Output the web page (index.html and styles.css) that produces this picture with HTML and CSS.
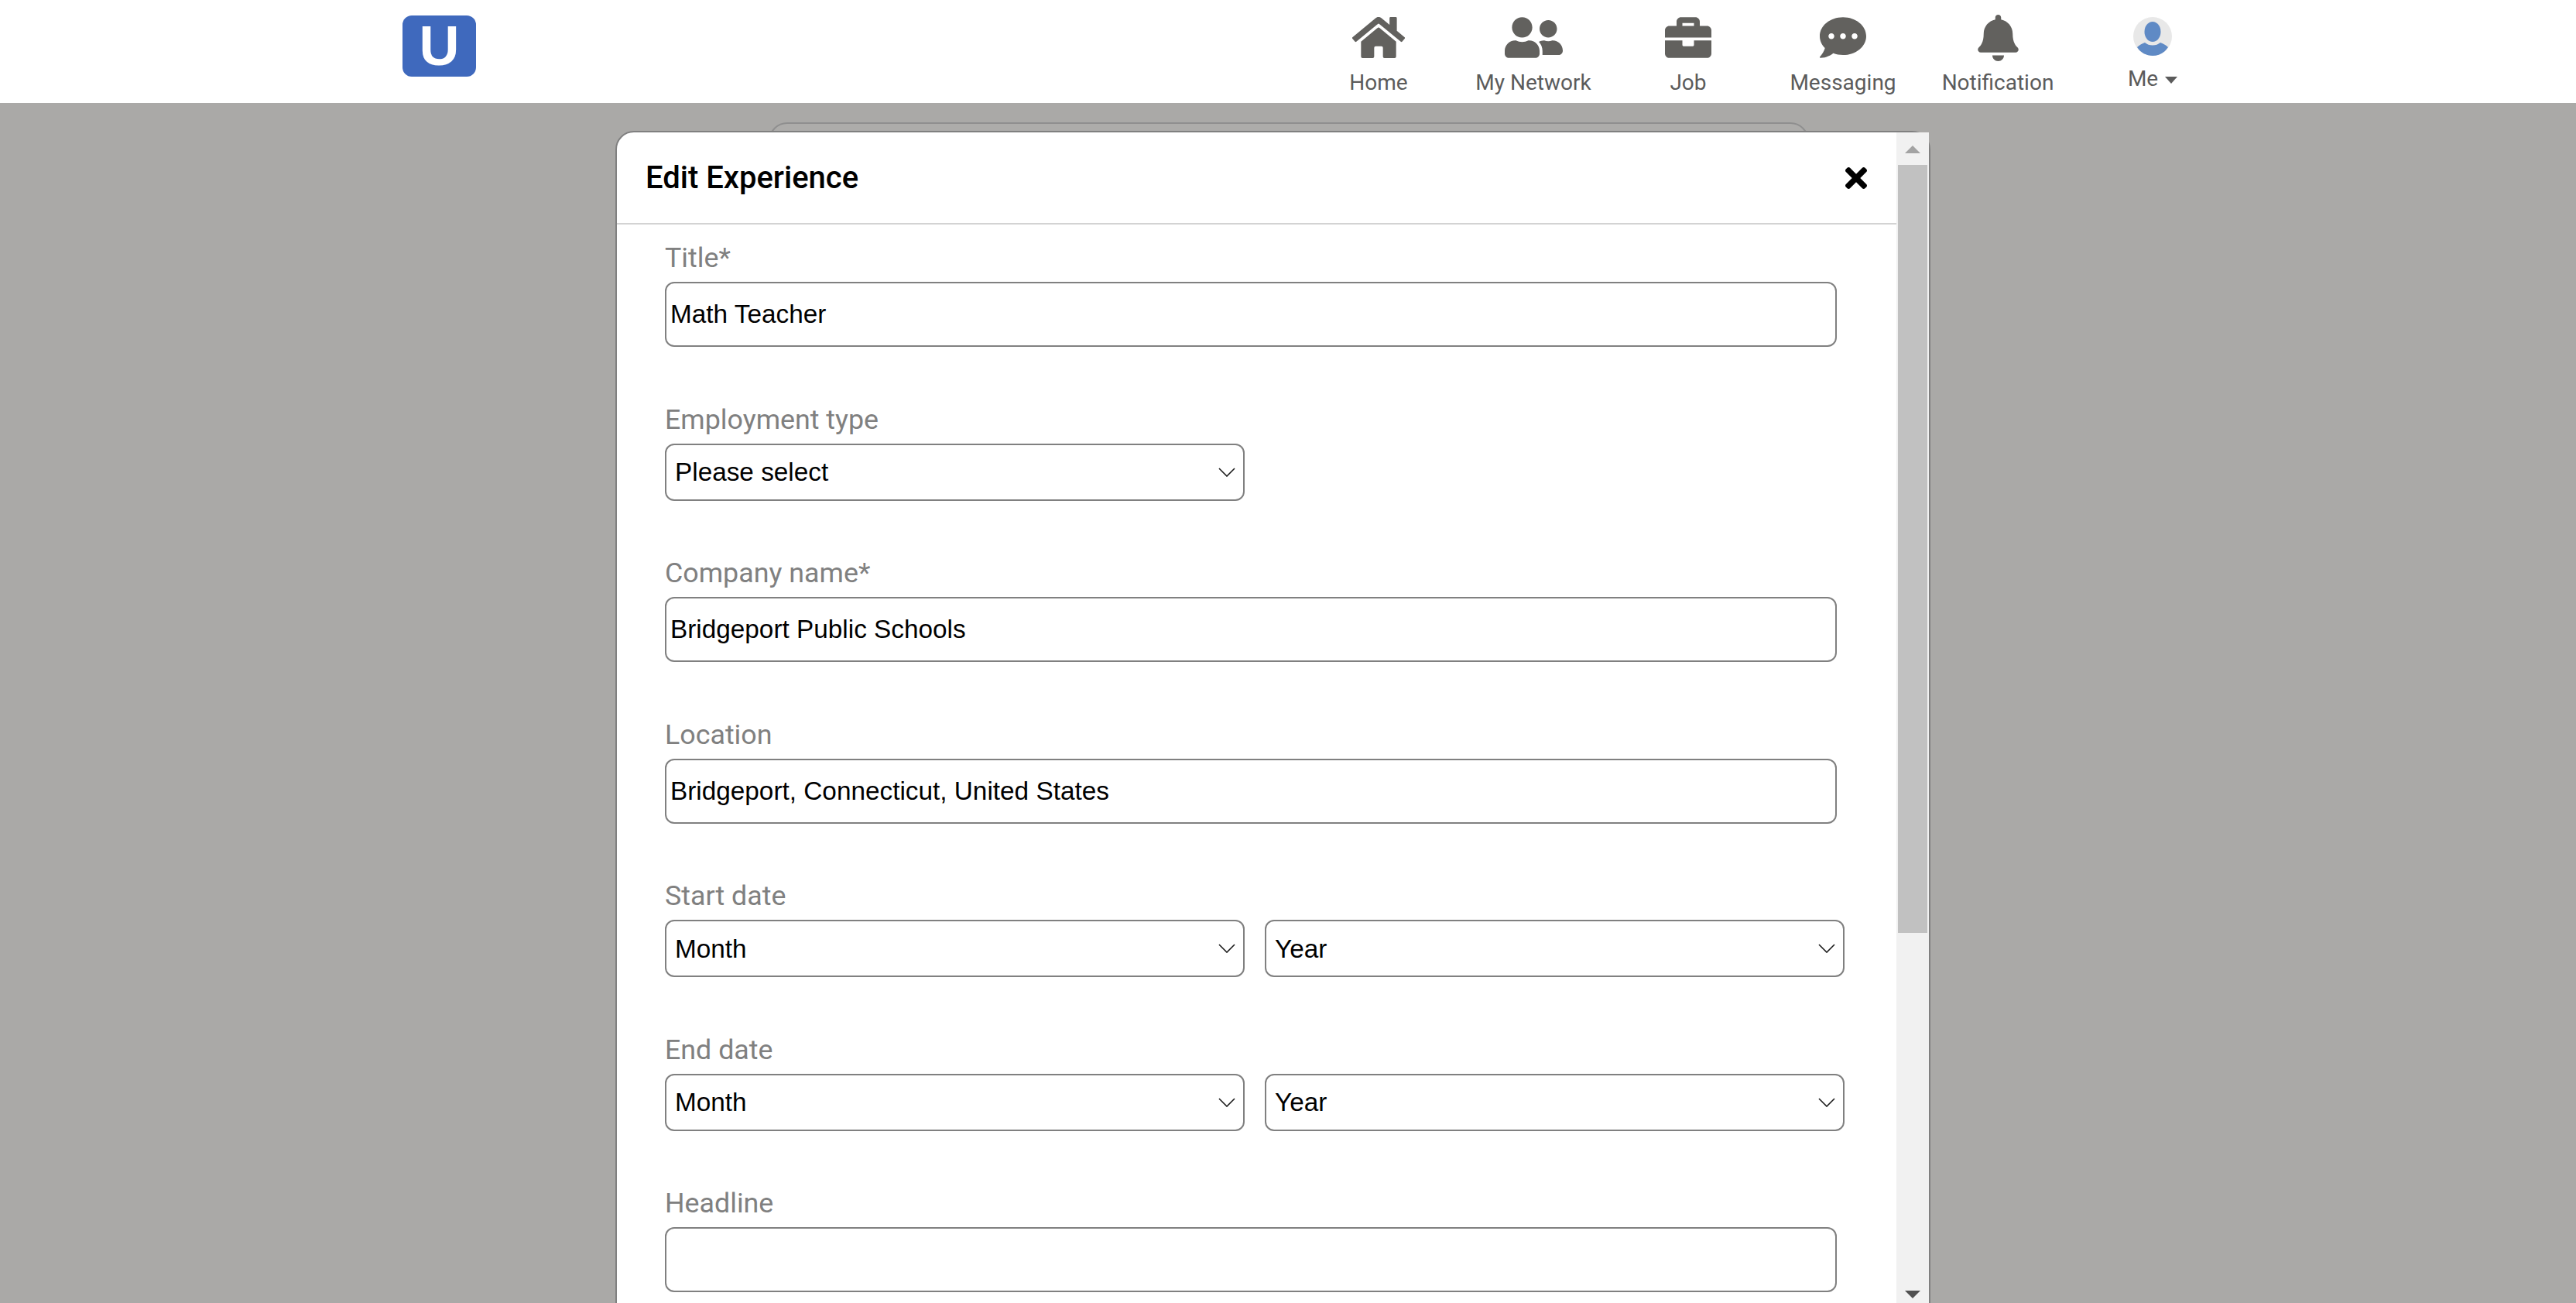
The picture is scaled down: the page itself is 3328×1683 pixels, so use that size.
FILE: index.html
```html
<!DOCTYPE html>
<html>
  <head>
    <title>Edit Experience</title>
    <link rel="stylesheet" href="styles.css">
  </head>
  <body>
    <nav class="navbar">
      <div class="logo">U</div>
      <div class="nav-items">
        <a class="nav-item">
          <svg class="icon icon-home" viewBox="0 32 576 448"><path d="M280.37 148.26L96 300.11V464a16 16 0 0 0 16 16l112.06-.29a16 16 0 0 0 15.92-16V368a16 16 0 0 1 16-16h64a16 16 0 0 1 16 16v95.64a16 16 0 0 0 16 16.05L464 480a16 16 0 0 0 16-16V300L295.67 148.26a12.19 12.19 0 0 0-15.3 0zM571.6 251.47L488 182.56V44.05a12 12 0 0 0-12-12h-56a12 12 0 0 0-12 12v72.61L318.47 43a48 48 0 0 0-61 0L4.34 251.47a12 12 0 0 0-1.6 16.9l25.5 31A12 12 0 0 0 45.15 301l235.22-193.74a12.19 12.19 0 0 1 15.3 0L530.9 301a12 12 0 0 0 16.9-1.6l25.5-31a12 12 0 0 0-1.7-16.93z"/></svg>
          <span>Home</span>
        </a>
        <a class="nav-item">
          <svg class="icon icon-network" viewBox="0 32 640 448"><path d="M192 256c61.9 0 112-50.1 112-112S253.9 32 192 32 80 82.1 80 144s50.1 112 112 112zm76.8 32h-8.3c-20.8 10-43.9 16-68.5 16s-47.6-6-68.5-16h-8.3C51.6 288 0 339.6 0 403.2V432c0 26.5 21.5 48 48 48h288c26.5 0 48-21.5 48-48v-28.8c0-63.6-51.6-115.2-115.2-115.2zM480 256c53 0 96-43 96-96s-43-96-96-96-96 43-96 96 43 96 96 96zm48 32h-3.8c-13.9 4.8-28.6 8-44.2 8s-30.3-3.2-44.2-8H432c-20.4 0-39.2 5.9-55.7 15.4 24.4 26.3 39.7 61.2 39.7 99.8v38.4c0 2.2-.5 4.3-.6 6.4H592c26.5 0 48-21.5 48-48 0-61.9-50.1-112-112-112z"/></svg>
          <span>My Network</span>
        </a>
        <a class="nav-item">
          <svg class="icon icon-job" viewBox="0 32 512 448"><path d="M320 336c0 8.84-7.16 16-16 16h-96c-8.84 0-16-7.16-16-16v-48H0v144c0 25.6 22.4 48 48 48h416c25.6 0 48-22.4 48-48V288H320v48zm144-208h-80V80c0-25.6-22.4-48-48-48H176c-25.6 0-48 22.4-48 48v48H48c-25.6 0-48 22.4-48 48v80h512v-80c0-25.6-22.4-48-48-48zm-144 0H192V96h128v32z"/></svg>
          <span>Job</span>
        </a>
        <a class="nav-item">
          <svg class="icon icon-job" viewBox="0 32 512 448"><path d="M256 32C114.6 32 0 125.1 0 240c0 49.6 21.4 95 57 130.7C44.5 421.1 2.7 466 2.2 466.5c-2.2 2.3-2.8 5.7-1.5 8.7S4.8 480 8 480c66.3 0 116-31.8 140.6-51.4 32.7 12.3 69 19.4 107.4 19.4 141.4 0 256-93.1 256-208S397.4 32 256 32zM128 272c-17.7 0-32-14.3-32-32s14.3-32 32-32 32 14.3 32 32-14.3 32-32 32zm128 0c-17.7 0-32-14.3-32-32s14.3-32 32-32 32 14.3 32 32-14.3 32-32 32zm128 0c-17.7 0-32-14.3-32-32s14.3-32 32-32 32 14.3 32 32-14.3 32-32 32z"/></svg>
          <span>Messaging</span>
        </a>
        <a class="nav-item">
          <svg class="icon icon-bell" viewBox="0 0 448 512"><path d="M224 512c35.32 0 63.97-28.65 63.97-64H160.03c0 35.35 28.65 64 63.97 64zm215.39-149.71c-19.32-20.76-55.47-51.99-55.47-154.29 0-77.7-54.48-139.9-127.94-155.16V32c0-17.67-14.32-32-31.98-32s-31.98 14.33-31.98 32v20.84C118.56 68.1 64.08 130.3 64.08 208c0 102.3-36.15 133.53-55.47 154.29-6 6.45-8.66 14.16-8.61 21.71.11 16.4 12.98 32 32.1 32h383.8c19.12 0 32-15.6 32.1-32 .05-7.55-2.61-15.27-8.61-21.71z"/></svg>
          <span>Notification</span>
        </a>
        <a class="nav-item nav-me">
          <svg class="avatar" viewBox="0 0 50 50">
            <circle cx="25" cy="25" r="25" fill="#e8e8e8"/>
            <ellipse cx="25" cy="19" rx="10.5" ry="13" fill="#5f8ac5"/>
            <path d="M5 39c3-3 7-5 10-6 3 2.500 6 3.500 10 3.500s7-1 10-3.500c3 1 7 3 10 6-4.500 7-12 11-20 11S9.500 46 5 39z" fill="#5f8ac5"/>
          </svg>
          <span class="me-label">Me <i class="caret"></i></span>
        </a>
      </div>
    </nav>

    <main class="page">
      <div class="page-card"></div>

      <div class="modal">
        <div class="modal-main">
          <header class="modal-header">
            <h2>Edit Experience</h2>
            <svg class="close" viewBox="0 80 352 352"><path d="M242.72 256l100.07-100.07c12.28-12.28 12.28-32.19 0-44.48l-22.24-22.24c-12.28-12.28-32.19-12.28-44.48 0L176 189.28 75.93 89.21c-12.28-12.28-32.19-12.28-44.48 0L9.21 111.45c-12.28 12.28-12.28 32.19 0 44.48L109.28 256 9.21 356.07c-12.28 12.28-12.28 32.19 0 44.48l22.24 22.24c12.28 12.28 32.2 12.28 44.48 0L176 322.72l100.07 100.07c12.28 12.28 32.2 12.28 44.48 0l22.24-22.24c12.28-12.28 12.28-32.19 0-44.48L242.72 256z"/></svg>
          </header>

          <form class="modal-body">
            <div class="field">
              <label>Title*</label>
              <input class="text-input" type="text" value="Math Teacher">
            </div>
            <div class="field">
              <label>Employment type</label>
              <div class="select-row">
                <div class="select-box">
                  <select><option>Please select</option></select>
                  <svg class="chevron" viewBox="0 0 22 12"><path d="M1 1l10 10L21 1"/></svg>
                </div>
              </div>
            </div>
            <div class="field">
              <label>Company name*</label>
              <input class="text-input" type="text" value="Bridgeport Public Schools">
            </div>
            <div class="field">
              <label>Location</label>
              <input class="text-input" type="text" value="Bridgeport, Connecticut, United States">
            </div>
            <div class="field">
              <label>Start date</label>
              <div class="select-row">
                <div class="select-box">
                  <select><option>Month</option></select>
                  <svg class="chevron" viewBox="0 0 22 12"><path d="M1 1l10 10L21 1"/></svg>
                </div>
                <div class="select-box">
                  <select><option>Year</option></select>
                  <svg class="chevron" viewBox="0 0 22 12"><path d="M1 1l10 10L21 1"/></svg>
                </div>
              </div>
            </div>
            <div class="field">
              <label>End date</label>
              <div class="select-row">
                <div class="select-box">
                  <select><option>Month</option></select>
                  <svg class="chevron" viewBox="0 0 22 12"><path d="M1 1l10 10L21 1"/></svg>
                </div>
                <div class="select-box">
                  <select><option>Year</option></select>
                  <svg class="chevron" viewBox="0 0 22 12"><path d="M1 1l10 10L21 1"/></svg>
                </div>
              </div>
            </div>
            <div class="field">
              <label>Headline</label>
              <input class="text-input" type="text">
            </div>
          </form>
        </div>

        <div class="scrollbar">
          <div class="scroll-btn"><i class="arrow-up"></i></div>
          <div class="scroll-track"><div class="scroll-thumb"></div></div>
          <div class="scroll-btn scroll-btn-down"><i class="arrow-down"></i></div>
        </div>
      </div>
    </main>
  </body>
</html>
```

FILE: styles.css
```css
html,
body {
  margin: 0;
  height: 100%;
  overflow: hidden;
}
body {
  display: flex;
  flex-direction: column;
  font-family: Roboto, sans-serif;
  background-color: #aaa9a7;
}

/* top bar */
.navbar {
  flex: none;
  height: 133px;
  box-sizing: border-box;
  background-color: #fff;
  padding: 20px 447px 0 520px;
  display: flex;
  justify-content: space-between;
  align-items: flex-start;
}
.logo {
  width: 95px;
  height: 79px;
  border-radius: 12px;
  background-color: #3f69bd;
  color: #fff;
  font-family: "Liberation Sans", sans-serif;
  font-weight: bold;
  font-size: 72px;
  line-height: 79px;
  text-align: center;
}
.nav-items {
  display: flex;
}
.nav-item {
  width: 200px;
  display: flex;
  flex-direction: column;
  align-items: center;
  color: #5b5b5b;
  font-size: 28px;
  line-height: 34px;
  padding-top: 2px;
}
.nav-item span {
  margin-top: 15px;
}
.icon {
  height: 53px;
  fill: #62615e;
  display: block;
}
.icon-home {
  width: 68px;
}
.icon-network {
  width: 75px;
}
.icon-job {
  width: 60px;
}
.icon-bell {
  width: 53px;
  height: 60px;
  margin-top: -3px;
  margin-bottom: -4px;
}
.avatar {
  width: 50px;
  height: 50px;
  display: block;
}
.nav-me .me-label {
  margin-top: 13px;
}
.caret {
  display: inline-block;
  vertical-align: middle;
  margin-left: 2px;
  border-left: 8px solid transparent;
  border-right: 8px solid transparent;
  border-top: 9px solid #5b5b5b;
}

/* page behind the modal */
.page {
  flex: 1;
  position: relative;
  overflow: hidden;
}
.page-card {
  width: 1344px;
  height: 400px;
  box-sizing: border-box;
  margin: 25px 0 0 993px;
  background-color: #adacaa;
  border: 2px solid #8f8f8f;
  border-radius: 24px;
}

/* modal */
.modal {
  position: absolute;
  left: 795px;
  top: 36px;
  width: 1699px;
  height: 1580px;
  box-sizing: border-box;
  display: flex;
  align-items: flex-start;
  background-color: #fff;
  border: 2px solid #808080;
  border-radius: 24px;
}
.modal-main {
  flex: 1;
  min-width: 0;
  height: 100%;
  overflow: hidden;
}
.modal-header {
  height: 119px;
  box-sizing: border-box;
  border-bottom: 2px solid #d3d3d3;
  padding: 0 38px 0 37px;
  display: flex;
  justify-content: space-between;
  align-items: center;
}
.modal-header h2 {
  margin: 0;
  font-size: 40px;
  font-weight: 500;
  color: #000;
}
.close {
  width: 28px;
  height: 28px;
  fill: #000;
}
.modal-body {
  padding: 20px 0 0 62px;
}
.field {
  margin-bottom: 70.5px;
}
.field label {
  display: block;
  color: #808080;
  font-size: 35.8px;
  line-height: 44px;
  padding-top: 1px;
  margin-bottom: 9px;
}
.text-input {
  display: block;
  width: 1514px;
  height: 84px;
  box-sizing: border-box;
  border: 2px solid #808080;
  border-radius: 12px;
  padding: 0 5px;
  outline: none;
  font-family: "Liberation Sans", sans-serif;
  font-size: 33.33px;
  color: #000;
  background-color: #fff;
}
.select-row {
  display: flex;
  gap: 26px;
}
.select-box {
  width: 749px;
  height: 74px;
  box-sizing: border-box;
  border: 2px solid #808080;
  border-radius: 12px;
  display: flex;
  align-items: center;
  padding-right: 10px;
  background-color: #fff;
}
.select-box select {
  flex: 1;
  height: 100%;
  min-width: 0;
  border: none;
  outline: none;
  appearance: none;
  background: transparent;
  padding: 0 11px;
  font-family: "Liberation Sans", sans-serif;
  font-size: 33.33px;
  color: #000;
}
.chevron {
  width: 22px;
  height: 12px;
  flex: none;
  fill: none;
  stroke: #1a1a1a;
  stroke-width: 1.6;
}

/* scrollbar */
.scrollbar {
  flex: none;
  width: 42px;
  height: 1512px;
  display: flex;
  flex-direction: column;
  background-color: #f1f1f1;
}
.scroll-btn {
  flex: none;
  height: 42px;
  display: flex;
  justify-content: center;
  padding-top: 17px;
  box-sizing: border-box;
}
.scroll-btn-down {
  padding-top: 26px;
}
.arrow-up {
  width: 0;
  height: 0;
  border-left: 10px solid transparent;
  border-right: 10px solid transparent;
  border-bottom: 10px solid #a3a3a3;
}
.arrow-down {
  width: 0;
  height: 0;
  border-left: 10px solid transparent;
  border-right: 10px solid transparent;
  border-top: 10px solid #505050;
}
.scroll-track {
  flex: 1;
  padding: 0 2px;
}
.scroll-thumb {
  height: 992px;
  background-color: #c1c1c1;
}
```
